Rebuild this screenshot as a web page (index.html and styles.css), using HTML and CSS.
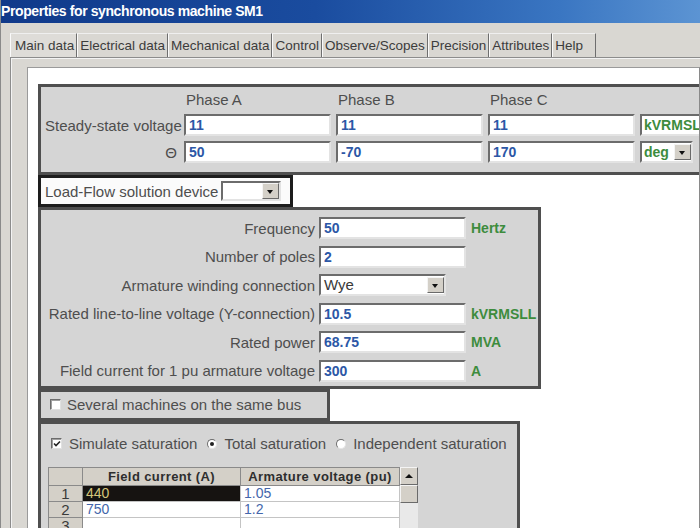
FILE: index.html
```html
<!DOCTYPE html>
<html lang="en">
<head>
    <meta charset="UTF-8">
    <title>Properties for synchronous machine SM1</title>
    <link rel="stylesheet" href="styles.css">
</head>
<body>
    <div class="titlebar">Properties for synchronous machine SM1</div>

    <div class="tabs">
        <span class="tab active">Main data</span>
        <span class="tab">Electrical data</span>
        <span class="tab">Mechanical data</span>
        <span class="tab">Control</span>
        <span class="tab">Observe/Scopes</span>
        <span class="tab">Precision</span>
        <span class="tab">Attributes</span>
        <span class="tab">Help</span>
    </div>

    <div class="pane">
        <div class="page">

            <!-- steady state voltages -->
            <div class="panel phases">
                <span></span>
                <span class="head">Phase A</span>
                <span class="head">Phase B</span>
                <span class="head">Phase C</span>
                <span></span>

                <label>Steady-state voltage</label>
                <span class="field">11</span>
                <span class="field">11</span>
                <span class="field">11</span>
                <span class="field unit-box">kVRMSLL</span>

                <label>&Theta;</label>
                <span class="field">50</span>
                <span class="field">-70</span>
                <span class="field">170</span>
                <span class="field unit-box combo">deg<span class="drop"></span></span>
            </div>

            <div class="loadflow">
                <label>Load-Flow solution device</label>
                <span class="field combo empty"><span class="drop"></span></span>
            </div>

            <!-- machine ratings -->
            <div class="panel ratings">
                <label>Frequency</label>
                <span class="field">50</span>
                <span class="unit">Hertz</span>

                <label>Number of poles</label>
                <span class="field">2</span>
                <span></span>

                <label>Armature winding connection</label>
                <span class="field combo plain short">Wye<span class="drop"></span></span>
                <span></span>

                <label>Rated line-to-line voltage (Y-connection)</label>
                <span class="field">10.5</span>
                <span class="unit">kVRMSLL</span>

                <label>Rated power</label>
                <span class="field">68.75</span>
                <span class="unit">MVA</span>

                <label>Field current for 1 pu armature voltage</label>
                <span class="field">300</span>
                <span class="unit">A</span>
            </div>

            <div class="panel several">
                <span class="check"></span>
                <label>Several machines on the same bus</label>
            </div>

            <!-- saturation -->
            <div class="panel saturation">
                <div class="options">
                    <span class="check checked">
                        <svg width="8" height="8" viewBox="0 0 8 8"><path d="M1 3.5 L3 5.5 L7 1.5" fill="none" stroke="#222" stroke-width="1.6"/></svg>
                    </span>
                    <label>Simulate saturation</label>
                    <span class="radio on"></span>
                    <label>Total saturation</label>
                    <span class="radio"></span>
                    <label>Independent saturation</label>
                </div>

                <div class="grid-wrap">
                    <table class="sat-table">
                        <tr>
                            <th class="corner"></th>
                            <th class="col1">Field current (A)</th>
                            <th class="col2">Armature voltage (pu)</th>
                        </tr>
                        <tr>
                            <th class="rownum">1</th>
                            <td class="selected">440</td>
                            <td>1.05</td>
                        </tr>
                        <tr>
                            <th class="rownum">2</th>
                            <td>750</td>
                            <td>1.2</td>
                        </tr>
                        <tr>
                            <th class="rownum">3</th>
                            <td></td>
                            <td></td>
                        </tr>
                    </table>
                    <div class="scrollbar">
                        <span class="arrow"></span>
                        <span class="thumb"></span>
                    </div>
                </div>
            </div>

        </div>
    </div>
</body>
</html>
```

FILE: styles.css
```css
body {
    margin: 0;
    width: 700px;
    height: 528px;
    overflow: hidden;
    background-color: #d9d7d2;
    font-family: "Liberation Sans", Arial, sans-serif;
    color: #4e4e4e;
    border-left: 1px solid #8a8a8a;
    box-sizing: border-box;
}
.titlebar {
    height: 23px;
    line-height: 23px;
    padding-left: 1px;
    background: linear-gradient(to right, #10398a 0%, #1a4c9f 45%, #3a76c2 80%, #5c94d3 100%);
    color: #fff;
    font-size: 14px;
    font-weight: bold;
    letter-spacing: -0.4px;
    margin-left: -1px;
}

/* tab strip */
.tabs {
    display: flex;
    margin: 10px 0 0 9px;
    height: 24px;
    border-bottom: 1px solid #8c8c8c;
    box-shadow: 0 1px 0 #f3f3f3;
}
.tab {
    padding: 0 2px;
    line-height: 23px;
    font-size: 13.5px;
    color: #3c3c3c;
    border-top: 1px solid #efefef;
    border-right: 1px solid #6e6e6e;
    border-left: 1px solid #fafafa;
}
.tab.active {
    padding: 0 2px 0 4px;
    background: #dedcd8;
}
.tab:last-child {
    padding-right: 12px;
}

.pane {
    margin-left: 9px;
    border-left: 1px solid #8c8c8c;
    padding: 9px 0 0 16px;
    box-shadow: inset 1px 0 0 #f3f3f3;
}
.page {
    height: 455px;
    background: #fff;
    border: 1px solid #9a9a9a;
    border-right-color: #8a8a8a;
    padding: 16px 0 0 10px;
    overflow: hidden;
}

/* group boxes */
.panel {
    background: #d5d5d5;
    border: 3px solid #4f4f4f;
    box-sizing: border-box;
}
label {
    font-size: 15px;
    color: #4e4e4e;
    white-space: nowrap;
}
.field {
    box-sizing: border-box;
    height: 22px;
    background: #fff;
    border: 2px solid;
    border-color: #6c6c6c #e3e3e3 #e3e3e3 #6c6c6c;
    padding: 0 3px;
    font-size: 14px;
    font-weight: bold;
    line-height: 18px;
    color: #2c57a6;
    white-space: nowrap;
    overflow: hidden;
}
.unit, .unit-box {
    font-size: 14px;
    font-weight: bold;
    color: #3d8c3d;
}
.combo {
    display: flex;
    align-items: center;
    justify-content: space-between;
    padding-right: 0;
}
.drop {
    width: 17px;
    height: 16px;
    box-sizing: border-box;
    margin-left: auto;
    background: #d4d0c8;
    border: 1px solid;
    border-color: #f4f4f4 #6a6a6a #6a6a6a #f4f4f4;
    position: relative;
}
.drop::after {
    content: "";
    position: absolute;
    left: 4px;
    top: 6px;
    border-left: 3.5px solid transparent;
    border-right: 3.5px solid transparent;
    border-top: 4px solid #111;
}

.phases {
    width: 672px;
    display: grid;
    grid-template-columns: 134px 147px 147px 147px 70px;
    grid-template-rows: 22px 22px 22px;
    column-gap: 5px;
    row-gap: 5px;
    align-items: center;
    padding: 0 0 9px 4px;
}
.phases label {
    text-align: right;
    padding-right: 2px;
}
.phases .head {
    font-size: 15px;
    padding-left: 2px;
    padding-top: 2px;
}
.unit-box {
    padding-left: 2px;
}
.unit-box.combo {
    width: 53px;
}

.loadflow {
    width: 255px;
    height: 32px;
    box-sizing: border-box;
    border: 3px solid #1d1d1d;
    background: #fbfbfb;
    display: flex;
    align-items: center;
    gap: 3px;
    padding-left: 4px;
}
.loadflow .field {
    width: 60px;
    height: 20px;
}
.loadflow .drop {
    height: 16px;
}

.ratings {
    width: 503px;
    display: grid;
    grid-template-columns: 270px 147px auto;
    grid-auto-rows: 22px;
    column-gap: 4px;
    row-gap: 6.5px;
    align-items: center;
    padding: 7px 0 4px 4px;
}
.ratings label {
    text-align: right;
}
.ratings .unit {
    padding-left: 1px;
}
.field.plain {
    font-weight: normal;
    font-size: 15px;
    color: #3a3a3a;
}
.field.short {
    width: 127px;
}

.several {
    width: 292px;
    height: 32px;
    display: flex;
    align-items: center;
    padding-left: 9px;
    gap: 6px;
}
.check {
    width: 11px;
    height: 11px;
    box-sizing: border-box;
    background: #fff;
    border: 1px solid;
    border-color: #6c6c6c #e0e0e0 #e0e0e0 #6c6c6c;
    box-shadow: inset 1px 1px 0 #a0a0a0;
    display: flex;
    align-items: center;
    justify-content: center;
}

.saturation {
    width: 482px;
    height: 120px;
    padding: 10px 0 0 7px;
}
.options {
    display: flex;
    align-items: center;
    height: 20px;
    padding-left: 3px;
}
.options label {
    margin: 0 10px 0 7px;
}
.radio {
    width: 10px;
    height: 10px;
    box-sizing: border-box;
    border-radius: 50%;
    background: #fff;
    border: 1px solid;
    border-color: #6c6c6c #e6e6e6 #e6e6e6 #6c6c6c;
    position: relative;
}
.radio.on::after {
    content: "";
    position: absolute;
    left: 2px;
    top: 2px;
    width: 4px;
    height: 4px;
    border-radius: 50%;
    background: #222;
}

.grid-wrap {
    display: flex;
    margin-top: 13px;
    width: 370px;
}
.sat-table {
    border-collapse: collapse;
    width: 352px;
    table-layout: fixed;
}
.sat-table th, .sat-table td {
    height: 15px;
    padding: 0 3px;
    line-height: 15px;
    font-size: 14px;
    border: 1px solid #c4c4c4;
}
.sat-table tr:first-child th {
    height: 17px;
    background: #d4d0c8;
    border: 1px solid #8a8a8a;
    font-size: 13px;
    letter-spacing: 0.4px;
    color: #2e2e2e;
}
.corner { width: 27px; }
.col1 { width: 151px; }
.sat-table th.rownum {
    background: #d4d0c8;
    border-color: #8a8a8a;
    font-weight: normal;
    font-size: 15px;
    color: #3a3a3a;
    text-align: center;
}
.sat-table td {
    background: #fff;
    color: #4466ab;
}
.sat-table td.selected {
    background: #161311;
    color: #d4c57c;
}
.scrollbar {
    width: 18px;
    display: flex;
    flex-direction: column;
    background: #e9e9e9;
}
.scrollbar span {
    box-sizing: border-box;
    height: 18px;
    background: #d4d0c8;
    border: 1px solid;
    border-color: #f4f4f4 #6a6a6a #6a6a6a #f4f4f4;
    position: relative;
}
.scrollbar .arrow::after {
    content: "";
    position: absolute;
    left: 4px;
    top: 6px;
    border-left: 4px solid transparent;
    border-right: 4px solid transparent;
    border-bottom: 4px solid #111;
}
```
